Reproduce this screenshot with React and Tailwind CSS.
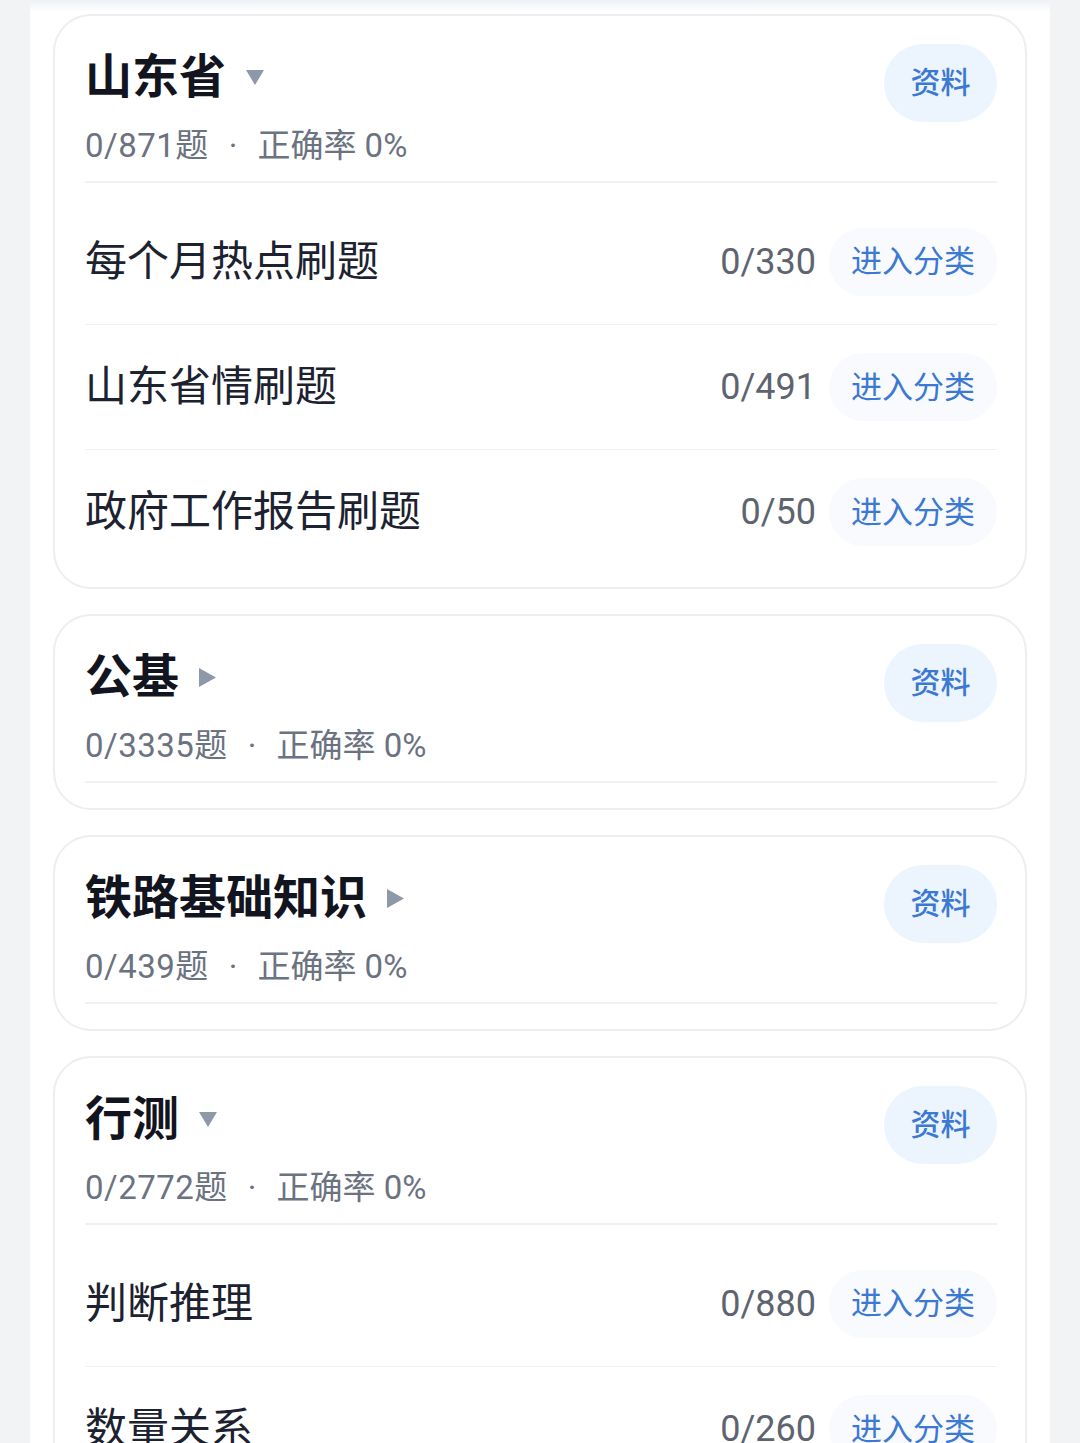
import React from "react";

const FONT = { fontFamily: 'Roboto, "Noto Sans CJK SC", sans-serif' };

function Caret({ dir }) {
  if (dir === "down") {
    return (
      <svg width="18" height="15" viewBox="0 0 18 15" className="ml-[20px] mt-[2px]">
        <polygon points="0,0 18,0 9,15" fill="#8d98a8" />
      </svg>
    );
  }
  return (
    <svg width="17" height="19" viewBox="0 0 17 19" className="ml-[20px] mt-[2px]">
      <polygon points="0,0 17,9.5 0,19" fill="#8d98a8" />
    </svg>
  );
}

function Row({ name, count, first }) {
  return (
    <div
      className={
        "flex items-center justify-between h-[125px] " +
        (first ? "" : "border-t border-[#eff1f4]")
      }
    >
      <span className="text-[42px] font-normal text-[#1c2230] leading-none">{name}</span>
      <div className="flex items-center">
        <span className="text-[36px] text-[#5d6470] leading-none">{count}</span>
        <button className="ml-[13px] h-[68px] px-[22px] rounded-full bg-[#f8fafd] text-[31px] text-[#3b79d3] leading-none">
          进入分类
        </button>
      </div>
    </div>
  );
}

function Card({ title, dir, total, rows }) {
  const hasRows = rows && rows.length > 0;
  return (
    <div
      className={
        "bg-white border-2 border-[#eceef2] rounded-[38px] pl-[30px] pr-[28px] pt-[28px] " +
        (hasRows ? "pb-[13px]" : "pb-[25px]")
      }
    >
      <div className="flex items-start justify-between">
        <div className="pt-[4px]">
          <div className="flex items-center h-[56px]">
            <span className="text-[47px] font-bold text-[#121520] leading-none">{title}</span>
            <Caret dir={dir} />
          </div>
          <div className="mt-[20px] h-[42px] flex items-center text-[33px] text-[#6b7280] leading-none">
            <span className="tracking-[0.5px]">{total}题</span>
            <span className="mx-[20px]">·</span>
            <span>正确率 0%</span>
          </div>
        </div>
        <button className="h-[78px] w-[113px] rounded-full bg-[#ecf4fd] text-[30px] font-medium text-[#3b79d3] leading-none">
          资料
        </button>
      </div>
      <div className="mt-[15px] h-[2px] bg-[#eff1f4]" />
      {hasRows && (
        <div className="mt-[16px]">
          {rows.map((r, i) => (
            <Row key={r.name} name={r.name} count={r.count} first={i === 0} />
          ))}
        </div>
      )}
    </div>
  );
}

export default function App() {
  return (
    <div style={FONT} className="w-[1080px] h-[1443px] overflow-hidden bg-[#f2f3f4] flex justify-center">
      <div className="w-[1020px] h-full bg-gradient-to-b from-[#eef2f6] via-white to-white bg-[length:100%_24px] bg-no-repeat bg-white px-[23px] pt-[14px] flex flex-col gap-[25px]">
        <Card
          title="山东省"
          dir="down"
          total="0/871"
          rows={[
            { name: "每个月热点刷题", count: "0/330" },
            { name: "山东省情刷题", count: "0/491" },
            { name: "政府工作报告刷题", count: "0/50" },
          ]}
        />
        <Card title="公基" dir="right" total="0/3335" />
        <Card title="铁路基础知识" dir="right" total="0/439" />
        <Card
          title="行测"
          dir="down"
          total="0/2772"
          rows={[
            { name: "判断推理", count: "0/880" },
            { name: "数量关系", count: "0/260" },
            { name: "资料分析", count: "0/800" },
          ]}
        />
      </div>
    </div>
  );
}
